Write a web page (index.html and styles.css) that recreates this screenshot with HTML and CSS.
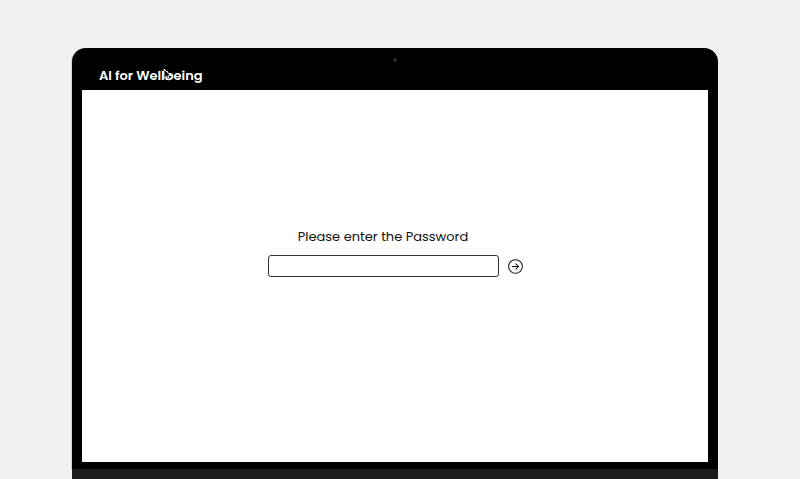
FILE: index.html
```html
<!DOCTYPE html>
<html>
<head>
<meta charset="utf-8">
<link rel="stylesheet" href="styles.css">
</head>
<body>
<div class="stage">
  <div class="laptop">
    <div class="bezel-top">
      <span class="brand">AI for Wellbeing</span>
      <span class="camera"></span>
      <svg class="cursor" width="9" height="13" viewBox="0 0 9 13"><path d="M1 1 L1 10.5 L3.3 8.4 L5 12 L6.4 11.3 L4.8 7.9 L8 7.7 Z" fill="#000" stroke="#fff" stroke-width="1"/></svg>
    </div>
    <div class="screen">
      <div class="login">
        <div class="field-col">
          <p class="prompt">Please enter the Password</p>
          <input class="pw" type="password">
        </div>
        <button class="go" aria-label="Submit">
          <svg width="15" height="15" viewBox="0 0 16 16"><circle cx="8" cy="8" r="7.3" fill="none" stroke="#111" stroke-width="1.1"/><path d="M4.6 8 H11.2 M8.4 5.2 L11.2 8 L8.4 10.8" fill="none" stroke="#111" stroke-width="1.1" stroke-linecap="round" stroke-linejoin="round"/></svg>
        </button>
      </div>
    </div>
    <div class="bezel-bottom"></div>
  </div>
  <div class="base"></div>
</div>
</body>
</html>
```
FILE: styles.css
```css
html, body {
  margin: 0;
  padding: 0;
  height: 100%;
  overflow: hidden;
  background: #f1f1f1;
  font-family: "Poppins", "Open Sans", "DejaVu Sans", sans-serif;
}
.stage {
  padding-top: 48px;
  padding-left: 72px;
  width: 646px;
}
.laptop {
  background: #000;
  border-radius: 14px 14px 0 0;
  padding: 0 10px;
  box-shadow: -1px 0 0 #cfcfcf;
}
.bezel-top {
  position: relative;
  height: 42px;
  display: flex;
  align-items: flex-end;
  padding-left: 17px;
}
.brand {
  color: #fff;
  font-weight: 600;
  font-size: 13px;
  line-height: 1;
  padding-bottom: 8px;
}
.camera {
  position: absolute;
  left: 311px;
  top: 10px;
  width: 4px;
  height: 4px;
  border-radius: 50%;
  background: #2a2a2a;
}
.cursor {
  position: absolute;
  left: 81px;
  top: 20px;
}
.screen {
  background: #fff;
  height: 372px;
  display: flex;
  justify-content: center;
  align-items: flex-start;
  padding-top: 137px;
  box-sizing: border-box;
}
.login {
  display: flex;
  align-items: flex-end;
  gap: 9px;
}
.field-col {
  display: flex;
  flex-direction: column;
  align-items: center;
}
.prompt {
  margin: 0 0 8px;
  font-size: 13px;
  color: #111;
  line-height: 20px;
}
.pw {
  width: 231px;
  height: 22px;
  box-sizing: border-box;
  border: 1px solid #333;
  border-radius: 3px;
  margin: 0;
  padding: 0 6px;
  background: #fff;
}
.go {
  border: none;
  background: none;
  padding: 0;
  margin: 0 0 3px;
  width: 15px;
  height: 16px;
  display: flex;
  align-items: center;
  justify-content: center;
}
.bezel-bottom {
  height: 7px;
  background: #000;
  margin: 0 -10px;
}
.base {
  height: 20px;
  background: #1c1c1c;
}
```
